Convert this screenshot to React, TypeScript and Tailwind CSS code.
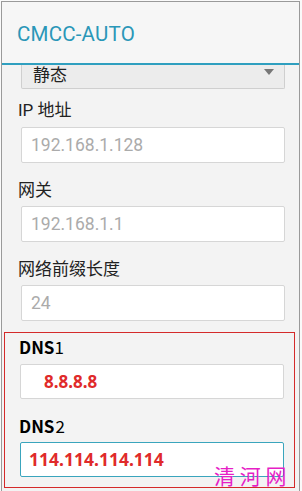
export default function App() {
  const fields = [
    { label: 'IP 地址', value: '192.168.1.128' },
    { label: '网关', value: '192.168.1.1' },
    { label: '网络前缀长度', value: '24' },
  ];

  return (
    <div className="relative w-[302px] h-[491px] overflow-hidden bg-[#fafafa] font-['Roboto','Noto_Sans_CJK_SC',sans-serif]">
      <div className="ml-[1px] mt-[1px] w-[299px] h-[490px] border-l border-t border-r border-[#9a9a9a] bg-[#f3f3f3] flex flex-col">
        {/* title */}
        <div className="h-[63px] shrink-0 flex items-center pl-[15px] pt-[3px] bg-[#f6f6f6] border-b-2 border-[#2f9fbf]">
          <span className="text-[20.5px] text-[#2a97b8] tracking-[0.2px]">CMCC-AUTO</span>
        </div>

        <div className="flex flex-col overflow-hidden">
          {/* spinner, scrolled partly under the title */}
          <div className="shrink-0 ml-[19px] w-[264px] h-[24px] rounded-b-[2px] border border-t-0 border-[#cfcfcf] bg-[#ececec] flex items-center justify-between pl-[11px] pr-[10px]">
            <span className="text-[17px] leading-[20px] text-[#222] -mt-[3px]">静态</span>
            <svg width="10" height="6" viewBox="0 0 10 6" className="-mt-[10px]">
              <path d="M0 0 H10 L5 6 Z" fill="#777" />
            </svg>
          </div>

          {fields.map((f, i) => (
            <div key={f.label} className="shrink-0 flex flex-col">
              <div className={`${i === 0 ? 'pt-[10px] pb-[6px]' : 'pt-[16px] pb-[5px]'} pl-[16px] text-[17px] leading-[22px] text-[#222]`}>
                {f.label}
              </div>
              <div className="ml-[19px] w-[264px] h-[36px] rounded-[2px] border border-[#d6d6d6] bg-white flex items-center pl-[9px]">
                <span className="text-[17.5px] text-[#ababab]">{f.value}</span>
              </div>
            </div>
          ))}

          {/* highlighted DNS box */}
          <div className="shrink-0 mt-[11px] ml-[2px] w-[291px] h-[156px] border border-[#d42a2a] flex flex-col">
            <div className="pt-[3px] pb-[6px] pl-[14px] text-[17px] leading-[22px] text-black font-['Noto_Sans_CJK_SC',sans-serif]">
              <span className="font-bold">DNS</span>
              <span className="font-normal">1</span>
            </div>
            <div className="ml-[15px] w-[264px] h-[35px] rounded-[2px] border border-[#d6d6d6] bg-white flex items-center pl-[23px]">
              <span className="text-[17px] font-bold text-[#e02a2a] font-['Noto_Sans',sans-serif]">8.8.8.8</span>
            </div>
            <div className="pt-[16px] pb-[5px] pl-[14px] text-[17px] leading-[22px] text-black font-['Noto_Sans_CJK_SC',sans-serif]">
              <span className="font-bold">DNS</span>
              <span className="font-normal ml-[1px]">2</span>
            </div>
            <div className="ml-[15px] w-[264px] h-[35px] rounded-[2px] border border-[#3aa5bd] bg-white flex items-center pl-[8px]">
              <span className="text-[17.5px] font-bold text-[#e02a2a] font-['Noto_Sans',sans-serif]">114.114.114.114</span>
            </div>
          </div>
        </div>
      </div>

      {/* watermark */}
      <div className="absolute left-[214px] top-[461px] whitespace-nowrap text-[21px] leading-[28px] text-[#e61fc6] font-['Noto_Sans_CJK_SC',sans-serif]">
        清 河 网
      </div>
    </div>
  );
}
